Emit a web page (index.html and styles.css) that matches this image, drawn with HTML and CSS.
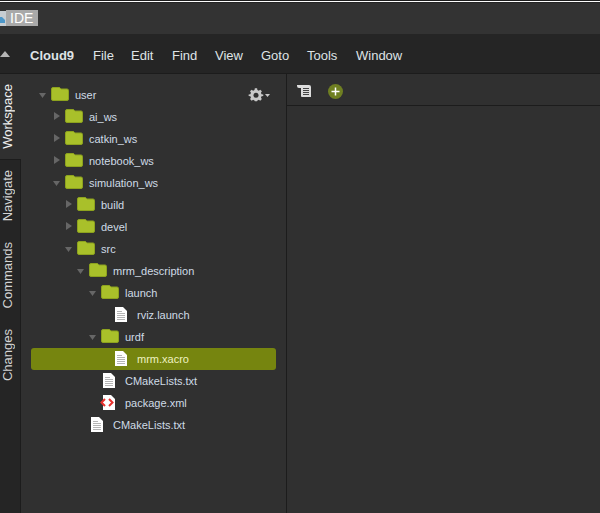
FILE: index.html
```html
<!DOCTYPE html>
<html>
<head>
<meta charset="utf-8">
<title>IDE</title>
<link rel="stylesheet" href="styles.css">
</head>
<body>
<svg class="defs" width="0" height="0">
  <defs>
    <symbol id="folder" viewBox="0 0 18 14">
      <path d="M.5 3V2Q.5 .5 2 .5H8Q9 .5 9.500 1.500L10 2H16Q17.500 2 17.500 3.500V12Q17.500 13.500 16 13.500H2Q.5 13.500 .5 12Z" fill="#a9c02a" stroke="#8da21e"/>
    </symbol>
    <symbol id="file" viewBox="0 0 12 15">
      <path d="M0 0H8L12 4V15H0Z" fill="#fff"/>
      <path d="M2 4.500H7M2 6.500H10M2 8.500H10M2 10.500H10M2 12.500H10" stroke="#b5b5b5"/>
    </symbol>
    <symbol id="xml" viewBox="0 0 15 15">
      <path d="M3 0H11L15 4V15H3Z" fill="#fff"/>
      <path d="M5 4L1.500 7.500L5 11M9 4L12.500 7.500L9 11" fill="none" stroke="#e8302c" stroke-width="2"/>
    </symbol>
    <symbol id="open" viewBox="0 0 7 5"><path d="M0 0H7L3.500 5Z" fill="#666"/></symbol>
    <symbol id="closed" viewBox="0 0 6 8"><path d="M0 0V8L6 4Z" fill="#666"/></symbol>
  </defs>
</svg>
<div class="app">
  <header class="titlebar">
    <div class="tab-title">
      <svg class="cloud" width="6" height="15" viewBox="0 0 6 15"><rect width="6" height="15" fill="#c7cdd2"/><path d="M0 6H2L5 9V12H0Z" fill="#4d97c9"/></svg>
      <span class="ide">IDE</span>
    </div>
  </header>
  <nav class="menubar">
    <svg class="collapse" width="10" height="6" viewBox="0 0 10 6"><path d="M0 6L5 0L10 6Z" fill="#b5b5b5"/></svg>
    <span class="brand">Cloud9</span>
    <span class="menu">File</span>
    <span class="menu">Edit</span>
    <span class="menu">Find</span>
    <span class="menu">View</span>
    <span class="menu">Goto</span>
    <span class="menu">Tools</span>
    <span class="menu">Window</span>
  </nav>
  <main class="main">
    <aside class="tabs">
      <div class="vtab active workspace"><span>Workspace</span></div>
      <div class="vtab navigate"><span>Navigate</span></div>
      <div class="vtab commands"><span>Commands</span></div>
      <div class="vtab changes"><span>Changes</span></div>
    </aside>
    <section class="tree">
      <svg class="gear" width="22" height="16" viewBox="0 0 22 16">
        <g fill="#c8c8c8">
          <path d="M6.200 1H8.800L9.200 3L10.800 3.700L12.500 2.600L14.400 4.500L13.300 6.200L14 7.800L16 8.200V9.800L14 10.200L13.300 11.800L14.400 13.500L12.500 15.400L10.800 14.300L9.200 15L8.800 16H6.200L5.800 15L4.200 14.300L2.500 15.400L.6 13.500L1.700 11.800L1 10.200L-1 9.800V8.200L1 7.800L1.700 6.200L.6 4.500L2.500 2.600L4.200 3.700L5.800 3Z" transform="translate(1.500 .5) scale(.86)"/>
          <path d="M17 7H22L19.500 10Z"/>
        </g>
        <circle cx="8" cy="8.200" r="2.500" fill="#303030"/>
      </svg>
      <div class="row l0"><svg class="arrow"><use href="#open"/></svg><svg class="folder"><use href="#folder"/></svg><span>user</span></div>
      <div class="row l1"><svg class="arrow shut"><use href="#closed"/></svg><svg class="folder"><use href="#folder"/></svg><span>ai_ws</span></div>
      <div class="row l1"><svg class="arrow shut"><use href="#closed"/></svg><svg class="folder"><use href="#folder"/></svg><span>catkin_ws</span></div>
      <div class="row l1"><svg class="arrow shut"><use href="#closed"/></svg><svg class="folder"><use href="#folder"/></svg><span>notebook_ws</span></div>
      <div class="row l1"><svg class="arrow"><use href="#open"/></svg><svg class="folder"><use href="#folder"/></svg><span>simulation_ws</span></div>
      <div class="row l2"><svg class="arrow shut"><use href="#closed"/></svg><svg class="folder"><use href="#folder"/></svg><span>build</span></div>
      <div class="row l2"><svg class="arrow shut"><use href="#closed"/></svg><svg class="folder"><use href="#folder"/></svg><span>devel</span></div>
      <div class="row l2"><svg class="arrow"><use href="#open"/></svg><svg class="folder"><use href="#folder"/></svg><span>src</span></div>
      <div class="row l3"><svg class="arrow"><use href="#open"/></svg><svg class="folder"><use href="#folder"/></svg><span>mrm_description</span></div>
      <div class="row l4"><svg class="arrow"><use href="#open"/></svg><svg class="folder"><use href="#folder"/></svg><span>launch</span></div>
      <div class="row l5"><i class="arrow"></i><svg class="file"><use href="#file"/></svg><span>rviz.launch</span></div>
      <div class="row l4"><svg class="arrow"><use href="#open"/></svg><svg class="folder"><use href="#folder"/></svg><span>urdf</span></div>
      <div class="row l5 selected"><i class="arrow"></i><svg class="file"><use href="#file"/></svg><span>mrm.xacro</span></div>
      <div class="row l4"><i class="arrow"></i><svg class="file"><use href="#file"/></svg><span>CMakeLists.txt</span></div>
      <div class="row l4"><i class="arrow"></i><svg class="file xml"><use href="#xml"/></svg><span>package.xml</span></div>
      <div class="row l3"><i class="arrow"></i><svg class="file"><use href="#file"/></svg><span>CMakeLists.txt</span></div>
    </section>
    <section class="editor">
      <div class="toolbar">
        <svg width="15" height="12" viewBox="0 0 15 12" class="outline">
          <path d="M0 0H12Q14 0 14 2V12H5Q4 12 4 11V3H2Q0 3 0 1Z" fill="#dcdcdc"/>
          <path d="M6 3.500H12M6 5.500H12M6 7.500H12M6 9.500H12" stroke="#444"/>
        </svg>
        <span class="add"><svg width="9" height="9" viewBox="0 0 9 9"><path d="M4.500 .5V8.500M.5 4.500H8.500" stroke="#fff" stroke-width="1.500"/></svg></span>
      </div>
    </section>
  </main>
</div>
</body>
</html>
```
FILE: styles.css
```css
* { box-sizing: border-box; }
html, body { margin: 0; height: 100%; overflow: hidden; background: #2f2f2f; }
.defs { display: block; height: 0; }
.app {
  width: 600px;
  height: 513px;
  display: flex;
  flex-direction: column;
  font-family: "Liberation Sans", Arial, sans-serif;
  overflow: hidden;
}
.titlebar {
  height: 34px;
  flex: none;
  padding-top: 9px;
  background: #333;
  border-top: 1px solid #1f1f1f;
  box-shadow: inset 0 1px 0 #fff, inset 0 2px 0 #252525;
}
.tab-title { display: flex; align-items: stretch; height: 16px; }
.cloud { display: block; margin-top: 1px; }
.ide {
  width: 32px;
  background: #a9a9a9;
  color: #fff;
  font-size: 14px;
  line-height: 16px;
  padding-left: 4px;
}
.menubar {
  height: 40px;
  flex: none;
  display: flex;
  align-items: center;
  padding-top: 3px;
  background: #252525;
  border-bottom: 1px solid #1c1c1c;
  color: #dfe3e6;
  font-size: 13px;
}
.collapse { margin: 0 20px 2px 0; flex: none; }
.brand { font-weight: 700; width: 63px; }
.menu:nth-of-type(2) { width: 38px; }
.menu:nth-of-type(3) { width: 41px; }
.menu:nth-of-type(4) { width: 43px; }
.menu:nth-of-type(5) { width: 46px; }
.menu:nth-of-type(6) { width: 46px; }
.menu:nth-of-type(7) { width: 49px; }
.main { flex: 1; display: flex; min-height: 0; }
.tabs {
  position: relative;
  z-index: 1;
  width: 21px;
  flex: none;
  display: flex;
  flex-direction: column;
  background: #252525;
  border-right: 1px solid #1c1c1c;
}
.vtab {
  display: flex;
  justify-content: flex-start;
  align-items: center;
  color: #d4d4d4;
  font-size: 13px;
}
.vtab span { writing-mode: vertical-rl; transform: rotate(180deg); white-space: nowrap; line-height: 15px; }
.vtab.active { background: #303030; color: #f0f0f0; width: 21px; }
.workspace { height: 86px; border-bottom: 1px solid #1c1c1c; }
.navigate { height: 72px; }
.commands { height: 87px; }
.changes { height: 73px; }
.tree {
  position: relative;
  width: 266px;
  flex: none;
  padding: 10px 0 0 10px;
  background: #303030;
  border-right: 1px solid #1c1c1c;
}
.gear { position: absolute; top: 13px; left: 227px; }
.row {
  position: relative;
  display: flex;
  align-items: center;
  width: 245px;
  height: 22px;
  color: #cfdbe6;
  font-size: 11px;
  border-radius: 3px;
}
.row.selected { background: #76850f; color: #eef2c2; }
.l0 { padding-left: 8px; }
.l1 { padding-left: 22px; }
.l2 { padding-left: 34px; }
.l3 { padding-left: 46px; }
.l4 { padding-left: 58px; }
.l5 { padding-left: 70px; }
.arrow { display: block; flex: none; width: 7px; height: 5px; margin-right: 5px; }
.arrow.shut { width: 6px; height: 8px; margin: -2px 5px 0 1px; }
.folder { display: block; flex: none; width: 18px; height: 14px; margin: -2px 6px 0 0; }
.file { display: block; flex: none; width: 12px; height: 15px; margin: -1px 10px 0 2px; }
.file.xml { width: 15px; margin: -1px 10px 0 -1px; }
.editor { flex: 1; min-width: 0; background: #303030; }
.toolbar {
  height: 32px;
  display: flex;
  align-items: center;
  padding: 3px 0 0 10px;
  gap: 16px;
  border-bottom: 1px solid #1c1c1c;
}
.outline { flex: none; }
.add {
  width: 15px;
  height: 15px;
  border-radius: 50%;
  background: #6f7f22;
  display: flex;
  align-items: center;
  justify-content: center;
}
```
